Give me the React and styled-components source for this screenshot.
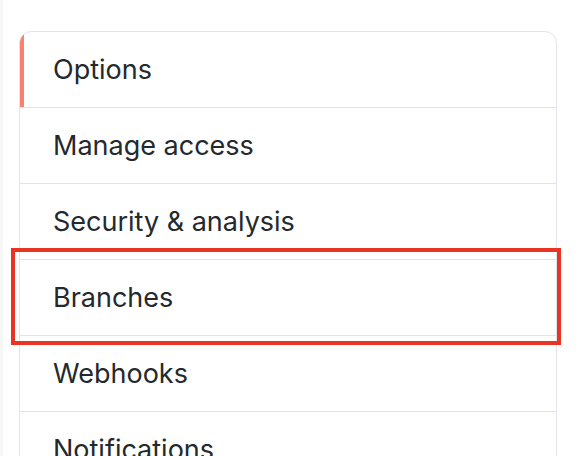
import React from 'react'
import styled, { createGlobalStyle } from 'styled-components'

const GlobalStyle = createGlobalStyle`
body {
  margin: 0;
  background: #ffffff;
  font-family: Inter, "Liberation Sans", Arial, sans-serif;
}
`

const Page = styled.div`
position: relative;
height: 456px;
overflow: hidden;
padding: 31px 0 0 16px;
box-sizing: border-box;
border-left: 3px solid #f7f7f8;
`

const Menu = styled.nav`
width: 538px;
border: 1px solid #e1e4e8;
border-radius: 12px;
overflow: hidden;
box-sizing: border-box;
`

const Item = styled.div`
position: relative;
height: 75px;
display: flex;
align-items: center;
padding: 0 33px;
font-size: 27px;
color: #24292e;
border-top: ${p => (p.first ? 'none' : '1px solid #e1e4e8')};
${p => p.selected && `
&::before {
  content: "";
  position: absolute;
  left: 0;
  top: 0;
  bottom: 0;
  width: 4px;
  background: #f9826c;
}
`}
`

const Highlight = styled.div`
position: absolute;
left: 8px;
top: 248px;
width: 550px;
height: 97px;
border: 4px solid #ea3323;
box-sizing: border-box;
`

export default function App() {
  let items = ["Options", "Manage access", "Security & analysis", "Branches", "Webhooks", "Notifications"]

  return (
    <>
      <GlobalStyle />
      <Page>
        <Menu>
          {items.map((a, i) => (
            <Item key={a} first={i === 0} selected={i === 0}>{a}</Item>
          ))}
        </Menu>
        <Highlight />
      </Page>
    </>
  )
}
